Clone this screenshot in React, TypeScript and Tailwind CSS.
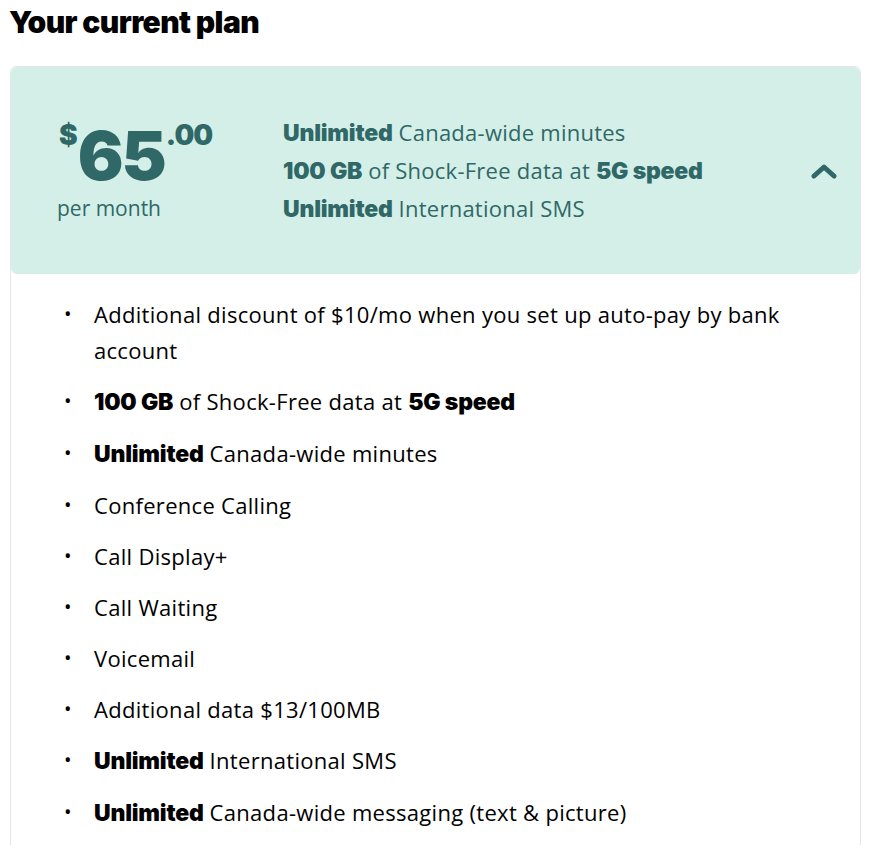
import { ReactNode } from 'react'

const B = ({ children }: { children: ReactNode }) => (
  <span className="font-black [font-family:Inter,sans-serif] text-[23px] tracking-[-0.2px]">{children}</span>
)

const items: ReactNode[] = [
  <>Additional discount of $10/mo when you set up auto-pay by bank account</>,
  <>
    <B>100 GB</B> of Shock-Free data at <B>5G speed</B>
  </>,
  <>
    <B>Unlimited</B> Canada-wide minutes
  </>,
  <>Conference Calling</>,
  <>Call Display+</>,
  <>Call Waiting</>,
  <>Voicemail</>,
  <>Additional data $13/100MB</>,
  <>
    <B>Unlimited</B> International SMS
  </>,
  <>
    <B>Unlimited</B> Canada-wide messaging (text &amp; picture)
  </>,
]

export default function App() {
  return (
    <div className="w-[891px] h-[845px] overflow-hidden bg-white [font-family:'Open_Sans',sans-serif]">
      <h1 className="pl-[9px] pt-[3px] text-[30px] leading-[38px] font-black text-black [font-family:Inter,sans-serif] tracking-[-0.6px]">
        Your current plan
      </h1>
      <div className="ml-[10px] mt-[25px] w-[851px] border border-[#e6e6e6] rounded-md">
        <div className="h-[207px] bg-[#d4efe8] rounded-md flex items-center text-[#2f6866]">
          <div className="w-[273px] pl-[48px] pt-[4px]">
            <div className="flex items-start leading-none [font-family:Inter,sans-serif] font-black">
              <span className="text-[28px] -mt-[2px]">$</span>
              <span className="text-[68px] leading-[60px] mt-[2px] tracking-[-2px]">65</span>
              <span className="text-[28px] ml-[1px] -mt-[2px] tracking-[-1px]">.00</span>
            </div>
            <div className="text-[21px] mt-[8px] leading-[30px] -ml-[2px]">per month</div>
          </div>
          <div className="flex-1 text-[22px] leading-[37px] -ml-[1px] tracking-[0.25px]">
            <div>
              <B>Unlimited</B> Canada-wide minutes
            </div>
            <div>
              <B>100 GB</B> of Shock-Free data at <B>5G speed</B>
            </div>
            <div>
              <B>Unlimited</B> International SMS
            </div>
          </div>
          <div className="w-[72px] flex justify-center">
            <svg width="26" height="16" viewBox="0 0 26 16" fill="none">
              <path d="M3 13 L13 4 L23 13" stroke="#2f6866" strokeWidth="5" strokeLinecap="round" strokeLinejoin="round" />
            </svg>
          </div>
        </div>
        <ul className="pl-[53px] pr-[60px] pt-[22px] pb-[20px] text-[22px] leading-[36px] tracking-[0.3px] text-black flex flex-col gap-[15px]">
          {items.map((it, i) => (
            <li key={i} className="flex">
              <span className="w-[30px] shrink-0 text-[20px]">•</span>
              <span>{it}</span>
            </li>
          ))}
        </ul>
      </div>
    </div>
  )
}
